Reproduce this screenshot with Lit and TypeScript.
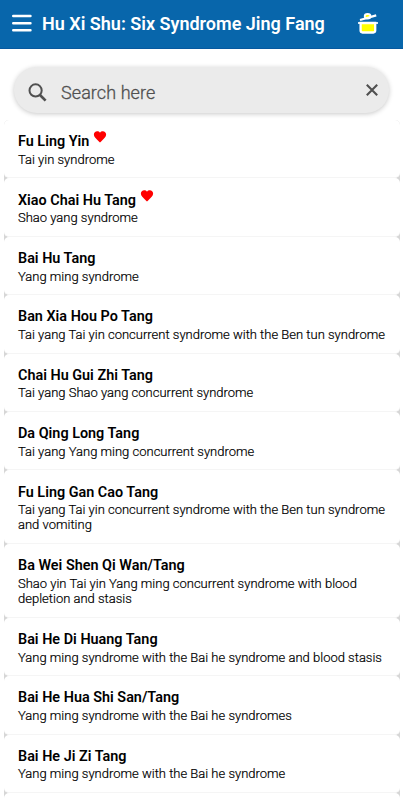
import { LitElement, html, css, svg } from "lit";
import { customElement, property } from "lit/decorators.js";

interface Formula {
  name: string;
  syndrome: string[];
  favorite?: boolean;
}

const formulas: Formula[] = [
  { name: "Fu Ling Yin", syndrome: ["Tai yin syndrome"], favorite: true },
  { name: "Xiao Chai Hu Tang", syndrome: ["Shao yang syndrome"], favorite: true },
  { name: "Bai Hu Tang", syndrome: ["Yang ming syndrome"] },
  { name: "Ban Xia Hou Po Tang", syndrome: ["Tai yang Tai yin concurrent syndrome with the Ben tun syndrome"] },
  { name: "Chai Hu Gui Zhi Tang", syndrome: ["Tai yang Shao yang concurrent syndrome"] },
  { name: "Da Qing Long Tang", syndrome: ["Tai yang Yang ming concurrent syndrome"] },
  { name: "Fu Ling Gan Cao Tang", syndrome: ["Tai yang Tai yin concurrent syndrome with the Ben tun syndrome", "and vomiting"] },
  { name: "Ba Wei Shen Qi Wan/Tang", syndrome: ["Shao yin Tai yin Yang ming concurrent syndrome with blood", "depletion and stasis"] },
  { name: "Bai He Di Huang Tang", syndrome: ["Yang ming syndrome with the Bai he syndrome and blood stasis"] },
  { name: "Bai He Hua Shi San/Tang", syndrome: ["Yang ming syndrome with the Bai he syndromes"] },
  { name: "Bai He Ji Zi Tang", syndrome: ["Yang ming syndrome with the Bai he syndrome"] },
  { name: "", syndrome: [] },
];

@customElement("formula-card")
class FormulaCard extends LitElement {
  @property({ attribute: false }) formula!: Formula;

  static styles = css`
    :host {
      display: block;
      box-sizing: border-box;
      min-height: 58.4px;
      padding: 13.3px 14px 0;
      border-radius: 5px;
      background: #fff;
      border-bottom: 1px solid #f5f5f5;
      color: #000;
    }
    .name {
      display: flex;
      gap: 3.500px;
      height: 18px;
      font-size: 14.4px;
      line-height: 18px;
      font-weight: 600;
      white-space: nowrap;
    }
    .heart {
      width: 14px;
      height: 14px;
      margin-top: -3px;
      fill: #f00;
    }
    .syndrome {
      font-size: 13px;
      font-weight: 300;
      -webkit-text-stroke: 0.2px #000;
      line-height: 15.3px;
      white-space: nowrap;
      padding: 0.5px 0 10.3px;
    }
  `;

  render() {
    const f = this.formula;
    return html`
      <div class="name">
        <span>${f.name}</span>
        ${f.favorite
          ? svg`<svg class="heart" viewBox="0 0 24 24"><path d="M12 21.4 10.5 20C5 15 1.5 12 1.5 7.900C1.500 4.700 4 2.300 7.200 2.300c1.900 0 3.700.9 4.800 2.300 1.100-1.400 2.900-2.300 4.800-2.300 3.200 0 5.700 2.400 5.700 5.600 0 4.100-3.500 7.100-9 12.100z"/></svg>`
          : ""}
      </div>
      <div class="syndrome">${f.syndrome.map((line) => html`<div>${line}</div>`)}</div>
    `;
  }
}

@customElement("app-root")
class AppRoot extends LitElement {
  static styles = css`
    :host {
      display: block;
      height: 800px;
      overflow: hidden;
      background: #fff;
      font-family: Roboto, "Liberation Sans", sans-serif;
    }
    header {
      display: flex;
      align-items: center;
      box-sizing: border-box;
      height: 49px;
      padding: 0 24px 3px 12px;
      background: #0866ab;
      border-bottom: 1px solid #0759a0;
      color: #fff;
    }
    .menu {
      width: 20px;
      height: 18px;
      flex: none;
    }
    h1 {
      flex: 1;
      margin: 2px 0 0 10px;
      font-size: 18px;
      line-height: 24px;
      font-weight: 600;
      white-space: nowrap;
    }
    .pot {
      width: 21px;
      height: 22px;
      flex: none;
    }
    .search {
      display: flex;
      align-items: center;
      box-sizing: border-box;
      height: 45.500px;
      margin: 18px 14px 7.500px 14px;
      padding: 0 11px 0 14px;
      border-radius: 23px;
      background: #ebebeb;
      box-shadow: 0 1px 5px rgba(0, 0, 0, 0.22);
      color: #505050;
    }
    .lens {
      width: 19px;
      height: 19px;
      margin-top: 5px;
    }
    .placeholder {
      flex: 1;
      margin: 6px 0 0 14px;
      font-size: 18px;
      font-weight: 300;
      letter-spacing: 0.08px;
      -webkit-text-stroke: 0.3px #505050;
      line-height: 22px;
    }
    .clear {
      width: 12px;
      height: 12px;
    }
    .list {
      margin: 0 3px 0 4px;
      background: linear-gradient(90deg, #d6d6d6 0 6px, #fff 6px calc(100% - 6px), #d6d6d6 calc(100% - 6px));
      border-radius: 5px 5px 0 0;
    }
  `;

  render() {
    return html`
      <header>
        <svg class="menu" viewBox="0 0 20 18" stroke="#fff" stroke-width="2.4" stroke-linecap="round">
          <path d="M1.200 2H18.500M1.200 9.200H18.500M1.200 16.200H18.500" />
        </svg>
        <h1>Hu Xi Shu: Six Syndrome Jing Fang</h1>
        <svg class="pot" viewBox="0 0 21 22" fill="none" stroke="#fff">
          <ellipse cx="9.600" cy="4.300" rx="2.900" ry="2.300" fill="#ff0" stroke-width="1.800" />
          <path d="M2 8 18.200 3.400" stroke-width="2.200" />
          <path d="M2.600 11V18.600Q2.600 20.500 4.500 20.500H15.300Q17.200 20.500 17.200 18.600V11Z" fill="#ff0" stroke-width="2.300" />
          <path d="M0 11H20" stroke-width="1.700" />
        </svg>
      </header>
      <div class="search">
        <svg class="lens" viewBox="0 0 19 19" fill="none" stroke="currentColor">
          <circle cx="7.600" cy="7.400" r="6.100" stroke-width="2" />
          <path d="M12 12 17.600 17.600" stroke-width="2.700" />
        </svg>
        <span class="placeholder">Search here</span>
        <svg class="clear" viewBox="0 0 12 12" stroke="currentColor" stroke-width="2.100">
          <path d="M.8.8 11.200 11.200M11.200.8.8 11.200" />
        </svg>
      </div>
      <div class="list">
        ${formulas.map((f) => html`<formula-card .formula=${f}></formula-card>`)}
      </div>
    `;
  }
}
